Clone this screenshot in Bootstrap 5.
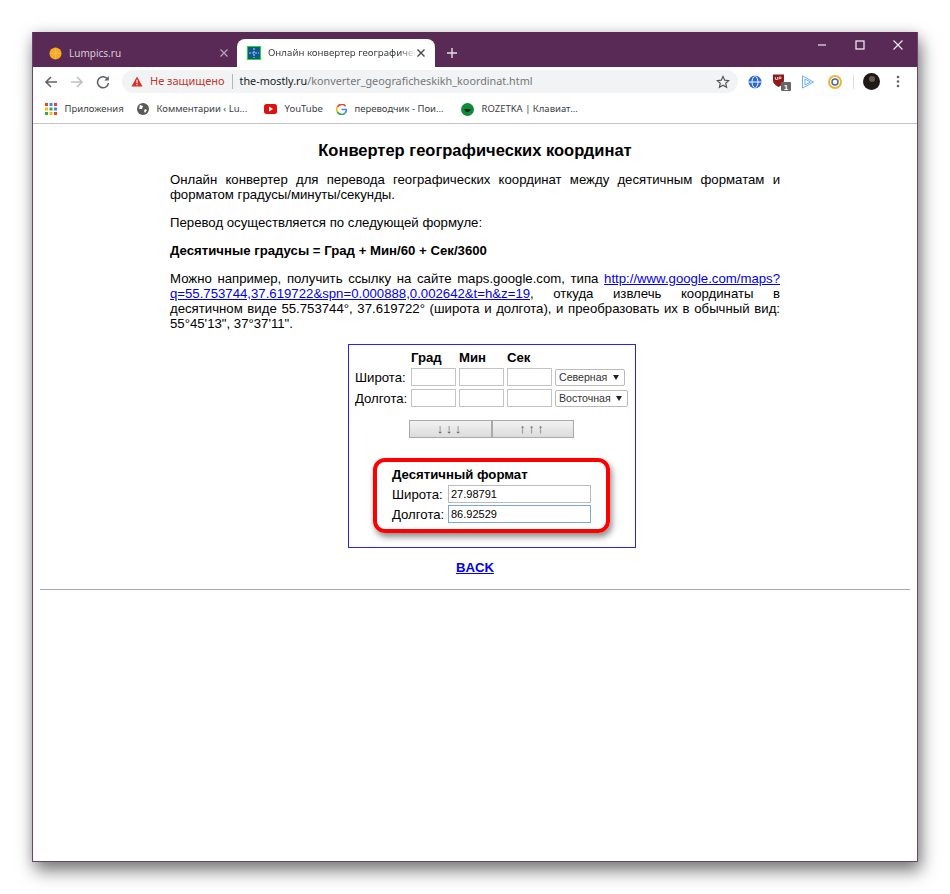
<!DOCTYPE html>
<html lang="ru">
<head>
    <meta charset="UTF-8">
    <title>Конвертер географических координат</title>
    <link href="https://cdn.jsdelivr.net/npm/bootstrap@5.3.0/dist/css/bootstrap.min.css" rel="stylesheet">
    <style>
        html, body { height: 100%; }
        body { background: #fff; padding: 32px; font-family: "Liberation Sans", Arial, sans-serif; color: #000; overflow: hidden; }
        .win { width: 886px; height: 830px; border: 1px solid #6b4568; border-top: 0; box-shadow: 3px 9px 16px rgba(0,0,0,.5), 0 0 12px rgba(0,0,0,.12); background: #fff; }
        .title-strip { height: 35px; background: #582a55; font-family: "Noto Sans", sans-serif; font-size: 10px; }
        .chrome-tab { height: 28px; width: 204px; margin-top: 7px; padding: 0 8px 0 16px; color: #d9cdd8; }
        .chrome-tab.on { width: 198px; background: #fff; color: #3c4043; border-radius: 8px 8px 0 0; padding: 0 9px 0 10px; font-size: 9.700px; }
        .tab-label { flex: 1; white-space: nowrap; overflow: hidden; padding-left: 7px; }
        .on .tab-label { -webkit-mask-image: linear-gradient(to right, #000 90%, transparent); mask-image: linear-gradient(to right, #000 90%, transparent); }
        .new-tab { margin: 15px 0 0 11px; height: 12px; }
        .win-btns { margin-left: auto; gap: 26px; padding: 7px 13px 0 0; }
        .tool-row { height: 29px; padding: 0 8px 0 11px; gap: 12px; }
        .omni { width: 616px; height: 23px; background: #f1f3f4; border-radius: 12px; padding: 0 8px 0 9px; font-family: "Noto Sans", sans-serif; font-size: 10.800px; color: #777; white-space: nowrap; }
        .warn-txt { color: #c5362b; font-size: 11px; margin-left: 7px; }
        .omni-sep { width: 1px; height: 15px; background: #b5b5b5; margin: 0 7px; }
        .host { color: #222; }
        .ext-row { margin-left: -8px; }
        .ext-slot { width: 26.500px; }
        .ext-sep { width: 1px; height: 14px; background: #ddd; margin: 0 9px 0 5px; }
        .ext-dots { margin-left: 16px; }
        .marks { height: 28px; padding: 0 12px 1px; font-family: "Noto Sans", sans-serif; font-size: 9.500px; color: #3c4043; border-bottom: 1px solid #c4c4c4; }
        .mark-item { gap: 7.500px; white-space: nowrap; }
        .mark-apps { width: 92px; }
        .mark-comm { width: 127px; }
        .mark-yt { width: 72px; }
        .mark-g { width: 125px; }
        .pg { padding-top: 17px; font-size: 13.200px; line-height: 15px; }
        .pg-title { font-size: 16.500px; font-weight: 700; text-align: center; margin: 0 0 12px; line-height: 19px; }
        .txt-col { width: 610px; margin: 0 0 0 137px; }
        .txt-col p { text-align: justify; margin: 0 0 13px; }
        .txt-col a, .back-link { color: #0000ee; }
        .calc { width: 288px; height: 204px; margin: 0 0 0 315px; border: 1px solid #2323f0; padding: 5px 0 0 6px; }
        .calc-head { font-weight: 700; padding-left: 56px; }
        .calc-head span { width: 48px; }
        .calc-row { height: 20px; margin-top: 1px; }
        .calc-row label { width: 56px; }
        .calc-row input { width: 45px; height: 18px; margin-right: 3px; border: 1px solid #c4c4c4; padding: 1px 2px; font-size: 12px; }
        .calc-row select { -webkit-appearance: none; appearance: none; height: 17px; font-size: 10.600px; color: #333; border: 1px solid #bbb; border-radius: 2px; padding: 0 0 0 3px; font-family: "Liberation Sans", sans-serif; background: #fff url("data:image/svg+xml,%3Csvg xmlns='http://www.w3.org/2000/svg' width='6' height='5'%3E%3Cpath d='M0 0h6L3 5z' fill='%23222'/%3E%3C/svg%3E") no-repeat right 5px center; }
        .sel-n { width: 70px; }
        .sel-e { width: 73px; }
        .first-row { margin-top: 2px; }
        .arrows { margin: 12px 0 0 54px; }
        .arrows button { width: 82.500px; height: 18px; padding: 0; border: 1px solid #aaa; background: linear-gradient(#f2f2f2,#dcdcdc); font-size: 13px; line-height: 14px; letter-spacing: 2.500px; color: #555; }
        .red-box { width: 237px; height: 75px; margin: 20px 0 0 18px; padding: 5px 0 0 15px; border: 4px solid #f00; border-radius: 12px; box-shadow: 2px 4px 6px rgba(0,0,0,.45); }
        .red-title { line-height: 15px; margin-bottom: 2px; }
        .red-row { height: 20px; }
        .red-row label { width: 56px; }
        .red-row input { width: 143px; height: 18px; border: 1px solid #bbb; padding: 1px 2px; font-size: 11px; font-family: "Liberation Sans", sans-serif; }
        .red-row input.hot { border-color: #7aa7e6; }
        .back-wrap { text-align: center; font-weight: 700; margin-top: 12px; line-height: 16px; }
        .rule { border: 0; border-top: 1px solid #aaa; opacity: 1; margin: 13px 7px 0; }
    </style>
</head>
<body>
<div class="win d-flex flex-column">
    <div class="title-strip d-flex">
        <div class="chrome-tab d-flex align-items-center">
            <svg width="13" height="13" viewBox="0 0 14 14"><circle cx="7" cy="7" r="6.500" fill="#f8a61c"/><path d="M7 1v12M1 7h12M3 3l8 8M11 3l-8 8" stroke="#fbc766" stroke-width=".6"/></svg>
            <span class="tab-label">Lumpics.ru</span>
            <svg width="10" height="10" viewBox="0 0 10 10"><path d="M1.500 1.500l7 7M8.500 1.500l-7 7" stroke="#b9a6b7" stroke-width="1.300"/></svg>
        </div>
        <div class="chrome-tab on d-flex align-items-center">
            <svg width="14" height="14" viewBox="0 0 14 14"><rect width="14" height="14" fill="#1fe01f"/><rect x="1" y="1" width="12" height="12" fill="#15548f"/><path d="M7 2v10M2 7h10" stroke="#8fd0f0" stroke-width="1.200" stroke-dasharray="2 1"/></svg>
            <span class="tab-label">Онлайн конвертер географичес</span>
            <svg width="10" height="10" viewBox="0 0 10 10"><path d="M1.500 1.500l7 7M8.500 1.500l-7 7" stroke="#45474a" stroke-width="1.400"/></svg>
        </div>
        <svg class="new-tab" width="12" height="12" viewBox="0 0 12 12"><path d="M6 1v10M1 6h10" stroke="#e6dde5" stroke-width="1.400"/></svg>
        <div class="win-btns d-flex">
            <svg width="12" height="12" viewBox="0 0 12 12"><path d="M2 6h8" stroke="#eee8ee" stroke-width="1.200"/></svg>
            <svg width="12" height="12" viewBox="0 0 12 12"><rect x="2" y="2" width="8" height="8" fill="none" stroke="#eee8ee" stroke-width="1.300"/></svg>
            <svg width="12" height="12" viewBox="0 0 12 12"><path d="M1.500 1.500l9 9M10.500 1.500l-9 9" stroke="#f2edf2" stroke-width="1.100"/></svg>
        </div>
    </div>
    <div class="tool-row d-flex align-items-center">
        <svg width="14" height="14" viewBox="0 0 14 14"><path d="M13 7H2M7 2L2 7l5 5" fill="none" stroke="#5f6368" stroke-width="1.600"/></svg>
        <svg width="14" height="14" viewBox="0 0 14 14"><path d="M1 7h11M7 2l5 5-5 5" fill="none" stroke="#bdc1c6" stroke-width="1.600"/></svg>
        <svg width="14" height="14" viewBox="0 0 14 14"><path d="M11.800 4.500A5.500 5.500 0 1 0 12.500 8" fill="none" stroke="#5f6368" stroke-width="1.600"/><path d="M12.800 1v4.500H8.300z" fill="#5f6368"/></svg>
        <div class="omni d-flex align-items-center">
            <svg width="12" height="11" viewBox="0 0 14 13"><path d="M7 .5l6.500 12H.5z" fill="#d93025"/><path d="M7 4.500v4M7 9.500v1.500" stroke="#fff" stroke-width="1.300"/></svg>
            <span class="warn-txt">Не защищено</span>
            <span class="omni-sep"></span>
            <span><span class="host">the-mostly.ru</span>/konverter_geograficheskikh_koordinat.html</span>
            <svg class="ms-auto" width="14" height="14" viewBox="0 0 14 14"><path d="M7 1.500l1.700 3.700 4 .4-3 2.700.9 4L7 10.300l-3.600 2 .9-4-3-2.700 4-.4z" fill="none" stroke="#555" stroke-width="1.200"/></svg>
        </div>
        <div class="ext-row d-flex align-items-center">
            <div class="ext-slot d-flex justify-content-center"><svg width="14" height="14" viewBox="0 0 14 14"><circle cx="7" cy="7" r="6.500" fill="#2a67d6"/><path d="M.5 7h13M7 .5c-4 3-4 10 0 13M7 .5c4 3 4 10 0 13" fill="none" stroke="#fff"/></svg></div>
            <div class="ext-slot d-flex justify-content-center"><svg width="18" height="18" viewBox="0 0 18 18"><path d="M0 1.500h11v6c0 3-2.500 5-5.500 6.500C2.500 12.500 0 10.500 0 7.500z" fill="#8f1c1c"/><path d="M2.500 4v2.500h2V4M6 6.500V4h2v1.500H6" fill="none" stroke="#f3dcdc" stroke-width=".8"/><rect x="8" y="9" width="10" height="9" rx="1" fill="#666"/><text x="13" y="16.500" font-size="8" font-weight="700" fill="#fff" text-anchor="middle" font-family="Liberation Sans">1</text></svg></div>
            <div class="ext-slot d-flex justify-content-center"><svg width="14" height="14" viewBox="0 0 14 14"><path d="M1.500 .8l11 6.200-11 6.200zM4 4l5.500 3L4 10z" fill="none" stroke="#6ab0f2"/></svg></div>
            <div class="ext-slot d-flex justify-content-center"><svg width="14" height="14" viewBox="0 0 14 14"><circle cx="7" cy="7" r="6" fill="none" stroke="#f2b23a" stroke-width="2"/><circle cx="7" cy="7" r="3" fill="none" stroke="#4a6b8f" stroke-width="1.500"/></svg></div>
            <span class="ext-sep"></span>
            <svg width="17" height="17" viewBox="0 0 17 17"><circle cx="8.500" cy="8.500" r="8.500" fill="#1d1a18"/><circle cx="9" cy="6" r="3" fill="#6a5a4c"/></svg>
            <svg class="ext-dots" width="4" height="13" viewBox="0 0 4 13"><circle cx="2" cy="2" r="1.300" fill="#5f6368"/><circle cx="2" cy="6.500" r="1.300" fill="#5f6368"/><circle cx="2" cy="11" r="1.300" fill="#5f6368"/></svg>
        </div>
    </div>
    <div class="marks d-flex align-items-center">
        <span class="mark-item mark-apps d-flex align-items-center">
            <svg width="12" height="12" viewBox="0 0 12 12"><g fill="#ea4335"><rect width="3" height="3"/><rect x="4.500" width="3" height="3" fill="#4285f4"/><rect x="9" width="3" height="3"/><rect y="4.500" width="3" height="3" fill="#fbbc05"/><rect x="4.500" y="4.500" width="3" height="3" fill="#34a853"/><rect x="9" y="4.500" width="3" height="3" fill="#4285f4"/><rect y="9" width="3" height="3" fill="#34a853"/><rect x="4.500" y="9" width="3" height="3" fill="#fbbc05"/><rect x="9" y="9" width="3" height="3"/></g></svg>
            Приложения</span>
        <span class="mark-item mark-comm d-flex align-items-center">
            <svg width="12" height="12" viewBox="0 0 12 12"><circle cx="6" cy="6" r="6" fill="#5a5a5a"/><path d="M3 2l3 1-1 3-3 0zM8 6l2 1-2 3-1-2z" fill="#fff"/></svg>
            Комментарии ‹ Lu...</span>
        <span class="mark-item mark-yt d-flex align-items-center">
            <svg width="13" height="10" viewBox="0 0 13 10"><rect width="13" height="10" rx="2.500" fill="#e01010"/><path d="M5 2.500v5l4-2.500z" fill="#fff"/></svg>
            YouTube</span>
        <span class="mark-item mark-g d-flex align-items-center">
            <svg width="11" height="11" viewBox="0 0 11 11"><path d="M9.500 2.200A4.700 4.700 0 0 0 1.500 3" fill="none" stroke="#ea4335" stroke-width="1.600"/><path d="M1.500 3a4.700 4.700 0 0 0 0 5" fill="none" stroke="#fbbc05" stroke-width="1.600"/><path d="M1.500 8a4.700 4.700 0 0 0 7.500 1" fill="none" stroke="#34a853" stroke-width="1.600"/><path d="M5.500 5.500h5c0 1.500-.5 2.700-1.500 3.500" fill="none" stroke="#4285f4" stroke-width="1.600"/></svg>
            переводчик - Пои...</span>
        <span class="mark-item d-flex align-items-center">
            <svg width="13" height="13" viewBox="0 0 13 13"><circle cx="6.500" cy="6.500" r="6.500" fill="#0f8a3c"/><path d="M3 6c1 4 6 4 7 0z" fill="#14301d"/></svg>
            ROZETKA | Клавиат...</span>
    </div>
    <div class="pg">
        <h1 class="pg-title">Конвертер географических координат</h1>
        <div class="txt-col">
            <p>Онлайн конвертер для перевода географических координат между десятичным форматам и форматом градусы/минуты/секунды.</p>
            <p>Перевод осуществляется по следующей формуле:</p>
            <p><b>Десятичные градусы = Град + Мин/60 + Сек/3600</b></p>
            <p>Можно например, получить ссылку на сайте maps.google.com, типа <a href="#">http://www.google.com/maps?<wbr>q=55.753744,37.619722&amp;spn=0.000888,0.002642&amp;t=h&amp;z=19</a>, откуда извлечь координаты в десятичном виде 55.753744°, 37.619722° (широта и долгота), и преобразовать их в обычный вид: 55°45'13", 37°37'11".</p>
        </div>
        <form class="calc">
            <div class="calc-head d-flex"><span>Град</span><span>Мин</span><span>Сек</span></div>
            <div class="calc-row first-row d-flex align-items-center">
                <label>Широта:</label><input type="text"><input type="text"><input type="text">
                <select class="sel-n"><option>Северная</option></select>
            </div>
            <div class="calc-row d-flex align-items-center">
                <label>Долгота:</label><input type="text"><input type="text"><input type="text">
                <select class="sel-e"><option>Восточная</option></select>
            </div>
            <div class="arrows d-flex"><button type="button">↓↓↓</button><button type="button">↑↑↑</button></div>
            <div class="red-box">
                <div class="red-title fw-bold">Десятичный формат</div>
                <div class="red-row d-flex align-items-center"><label>Широта:</label><input type="text" value="27.98791"></div>
                <div class="red-row d-flex align-items-center"><label>Долгота:</label><input class="hot" type="text" value="86.92529"></div>
            </div>
        </form>
        <div class="back-wrap"><a class="back-link" href="#">BACK</a></div>
        <hr class="rule">
    </div>
</div>
<script src="https://cdn.jsdelivr.net/npm/bootstrap@5.3.0/dist/js/bootstrap.bundle.min.js"></script>
</body>
</html>
